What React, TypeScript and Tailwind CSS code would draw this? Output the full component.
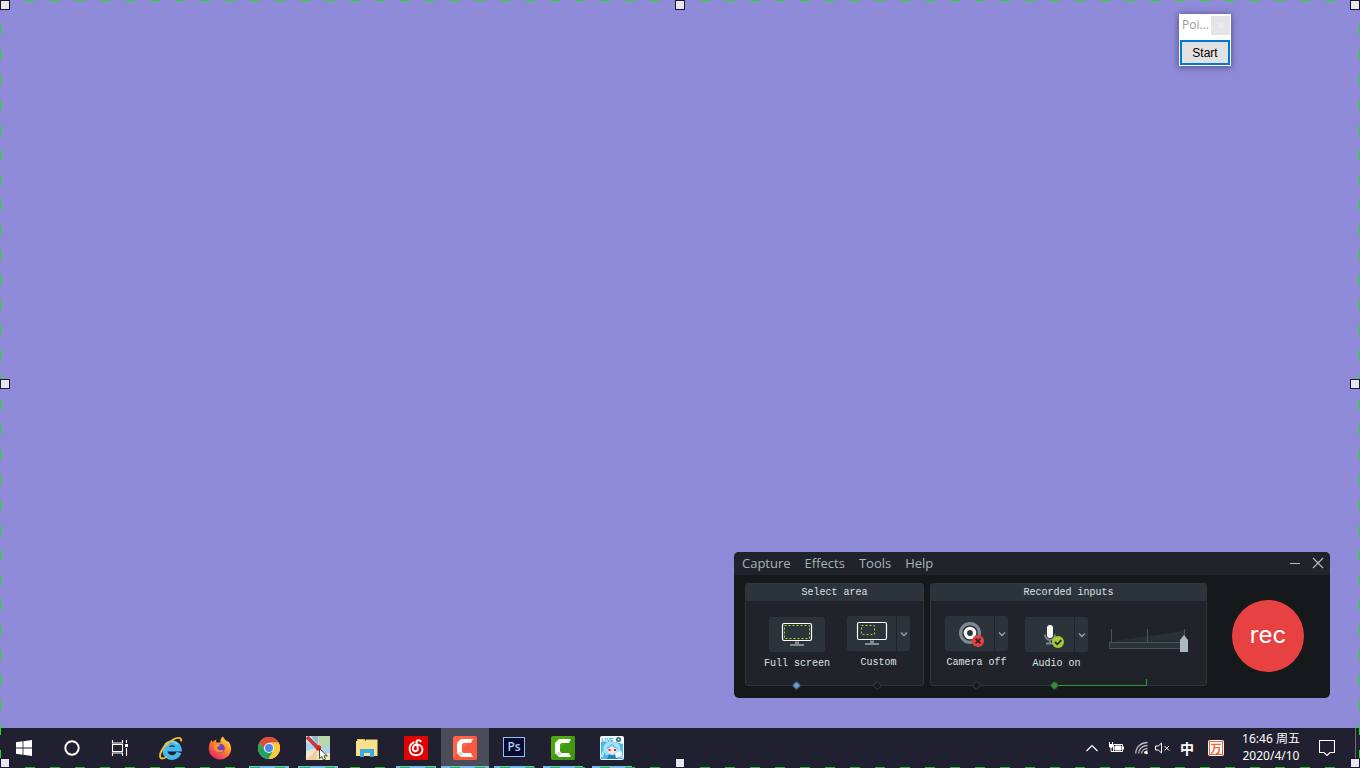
import type { ReactNode } from "react";

const LABEL = "font-['Liberation_Mono','Noto_Sans_CJK_SC',monospace] text-[10px] leading-3 text-[#dfe2e5]";

function Chevron() {
  return (
    <svg width="8" height="6" viewBox="0 0 8 6" fill="none" stroke="#9aa5ad" strokeWidth="1.3">
      <path d="M1 1.5 4 4.5 7 1.5" />
    </svg>
  );
}

function Monitor({ area }: { area: "full" | "custom" }) {
  return (
    <svg width="32" height="26" viewBox="0 0 32 26" fill="none">
      <rect x="1.5" y="1.5" width="29" height="17" rx="1.5" stroke="#ffffff" strokeWidth="1.2" />
      <path d="M14 19.5h4v2.5h5v2H9v-2h5z" fill="#7f8b95" />
      {area === "full" ? (
        <rect x="3.5" y="3.5" width="25" height="13" stroke="#a5d62b" strokeDasharray="2 2" />
      ) : (
        <rect x="5.5" y="4.5" width="13" height="9" stroke="#a5d62b" strokeDasharray="2 2" />
      )}
    </svg>
  );
}

function CameraIcon() {
  return (
    <svg width="28" height="28" viewBox="-2 -1 28 28" fill="none">
      <circle cx="12" cy="12" r="9.4" stroke="#7d8893" strokeWidth="3.2" />
      <circle cx="12" cy="12" r="4.6" stroke="#ffffff" strokeWidth="3.4" />
      <circle cx="20" cy="20" r="6" fill="#e9403f" />
      <path d="m17.6 17.6 4.8 4.8m0-4.8-4.8 4.8" stroke="#24272b" strokeWidth="1.8" />
    </svg>
  );
}

function MicIcon() {
  return (
    <svg width="28" height="28" viewBox="-2 -1 28 28" fill="none">
      <path d="M7 12.5a5 5.5 0 0 0 10 0M12 18v3M8 21.500h8" stroke="#7d8893" strokeWidth="1.8" />
      <rect x="9" y="3" width="6" height="13" rx="3" fill="#ffffff" />
      <circle cx="20" cy="20" r="6" fill="#a4cb2f" />
      <path d="m17 20 2.300 2.300 4-4.200" stroke="#24272b" strokeWidth="1.8" />
    </svg>
  );
}

function CaptureControl({ label, icon, menu, low }: { label: string; icon: ReactNode; menu?: boolean; low?: boolean }) {
  return (
    <div className={low ? "flex flex-col items-center pt-px" : "flex flex-col items-center"}>
      <div className="flex gap-px">
        <button
          type="button"
          aria-label={label}
          className={
            menu
              ? "flex h-[35px] w-[49px] items-center justify-center rounded-l-[3px] bg-[#2d333b]"
              : "flex h-[35px] w-14 items-center justify-center rounded-[3px] bg-[#2d333b]"
          }
        >
          {icon}
        </button>
        {menu && (
          <button
            type="button"
            aria-label={label + " options"}
            className="flex h-[35px] w-[13px] items-center justify-center rounded-r-[3px] bg-[#2d333b]"
          >
            <Chevron />
          </button>
        )}
      </div>
      <span className={LABEL + " mt-1.5 whitespace-nowrap"}>{label}</span>
    </div>
  );
}

function Dot({ className }: { className: string }) {
  return <span className={"absolute -bottom-[4px] size-[7px] rotate-45 rounded-[2px] border " + className} />;
}

function Group({ title, className, children }: { title: string; className: string; children: ReactNode }) {
  return (
    <section className={"relative flex h-[103px] flex-col rounded-[3px] border border-[#2f353c] bg-[#20242a] " + className}>
      <h2 className={LABEL + " flex h-[17px] items-center justify-center bg-[#2d333b]"}>{title}</h2>
      {children}
    </section>
  );
}

function Volume() {
  return (
    <div className="relative flex h-6 w-20 items-end">
      <svg className="absolute left-0 top-0" width="80" height="25" viewBox="0 0 80 25" fill="none">
        <path d="M2 13.500 75 3v10.500z" fill="#293136" />
        <path d="M2.500 1v13M38.500 1v13M75.500 1v13" stroke="#46555b" />
        <rect x=".5" y="14.500" width="74" height="6" fill="#2a3438" stroke="#46555b" />
      </svg>
      <input
        type="range"
        aria-label="Audio level"
        defaultValue={100}
        className="relative h-[17px] w-[79px] appearance-none bg-transparent [&::-webkit-slider-thumb]:h-[17px] [&::-webkit-slider-thumb]:w-2 [&::-webkit-slider-thumb]:appearance-none [&::-webkit-slider-thumb]:bg-[#abb8bf] [&::-webkit-slider-thumb]:[clip-path:polygon(50%_0,100%_30%,100%_100%,0_100%,0_30%)]"
      />
    </div>
  );
}

function Recorder() {
  return (
    <div className="absolute bottom-[30px] right-[30px] w-[596px] overflow-hidden rounded-[5px] bg-[#15191c]">
      <header className="flex h-[23px] items-center justify-between bg-[#20242a] pb-0.5 pl-2 pr-1.5">
        <nav className="flex gap-3.5 font-['Open_Sans','Noto_Sans',sans-serif] text-[13px] leading-5 text-[#a6b3bb]">
          {["Capture", "Effects", "Tools", "Help"].map((m) => (
            <button key={m} type="button">
              {m}
            </button>
          ))}
        </nav>
        <div className="flex items-center gap-3">
          <button type="button" aria-label="Minimize">
            <svg width="10" height="12" viewBox="0 0 10 12">
              <path d="M0 6.500h10" stroke="#b3bdc4" />
            </svg>
          </button>
          <button type="button" aria-label="Close">
            <svg width="12" height="12" viewBox="0 0 12 12">
              <path d="m1 1 10 10M11 1 1 11" stroke="#b3bdc4" strokeWidth="1.1" />
            </svg>
          </button>
        </div>
      </header>
      <div className="flex items-start pb-3 pl-[11px] pt-2">
        <Group title="Select area" className="w-[179px]">
          <div className="flex items-start gap-[17px] pl-[18px] pt-[15px]">
            <CaptureControl label="Full screen" icon={<Monitor area="full" />} low />
            <CaptureControl label="Custom" icon={<Monitor area="custom" />} menu />
          </div>
          <Dot className="left-[47px] border-[#3c5069] bg-[#6699d0]" />
          <Dot className="left-[128px] border-[#343a41] bg-[#15191c]" />
        </Group>
        <Group title="Recorded inputs" className="ml-1.5 w-[277px]">
          <div className="flex items-start pl-3.5 pt-[15px]">
            <CaptureControl label="Camera off" icon={<CameraIcon />} menu />
            <div className="ml-[17px]">
              <CaptureControl label="Audio on" icon={<MicIcon />} menu low />
            </div>
            <div className="ml-[21px] mt-3">
              <Volume />
            </div>
          </div>
          <span className="absolute -bottom-px left-[124px] h-[7px] w-[92px] border-b border-r border-[#2f9a2c]" />
          <Dot className="left-[42px] border-[#343a41] bg-[#15191c]" />
          <Dot className="left-[120px] border-[#2a5a2d] bg-[#34912f]" />
        </Group>
        <button
          type="button"
          className="ml-[25px] mt-[17px] flex size-[72px] items-center justify-center rounded-full bg-[#e84142] pb-0.5 font-['Inter',sans-serif] text-2xl leading-6 text-white"
        >
          rec
        </button>
      </div>
    </div>
  );
}

function PointWindow() {
  return (
    <div className="absolute right-[129px] top-3.5 flex w-[52px] flex-col bg-white p-px shadow-[0_1px_6px_1px_rgba(40,35,90,0.5)]">
      <div className="flex h-[25px] items-start justify-between pl-0.5 pt-px">
        <span className="font-['Open_Sans','Noto_Sans',sans-serif] text-xs leading-[18px] text-[#999999]">Poi...</span>
        <button type="button" aria-label="Close" className="flex h-[19px] w-[19px] items-center justify-center bg-[#e4e4e7]">
          <svg width="7" height="7" viewBox="0 0 7 7">
            <path d="m1 1 5 5M6 1 1 6" stroke="#f0f0f3" strokeWidth="1.200" />
          </svg>
        </button>
      </div>
      <button
        type="button"
        className="h-[25px] border-2 border-[#0078d7] bg-[#e1e1e1] font-['Liberation_Sans',sans-serif] text-xs text-black"
      >
        Start
      </button>
    </div>
  );
}

function CamtasiaIcon({ green }: { green?: boolean }) {
  return (
    <svg width="24" height="24" viewBox="0 0 24 24">
      <rect width="24" height="24" rx="2" fill={green ? "#4ba80f" : "#ff6447"} />
      <path d="M0 22 22 0h0a2 2 0 0 1 2 2v20a2 2 0 0 1-2 2H2a2 2 0 0 1-2-2z" fill={green ? "#3c9210" : "#f9523a"} opacity=".7" />
      <path d="M20 3H8L4 7v10l4 4h12l-2-4h-7.500L9 15.500v-7L10.500 7H18z" fill="#ffffff" />
      <path d="M4 17 9 15.500 10.500 17 8 21z" fill="#d9dddc" />
    </svg>
  );
}

const startIcon = (
  <svg width="16" height="16" viewBox="0 0 16 16" fill="#ffffff">
    <path d="M0 2.200 6.600 1.300v6.300H0zM7.400 1.200 16 0v7.600H7.400zM0 8.400h6.600v6.300L0 13.800zM7.400 8.400H16V16l-8.600-1.200z" />
  </svg>
);

const searchIcon = (
  <svg width="16" height="16" viewBox="0 0 16 16" fill="none">
    <circle cx="8" cy="8" r="6.700" stroke="#ffffff" strokeWidth="1.900" />
  </svg>
);

const taskViewIcon = (
  <svg width="18" height="18" viewBox="0 0 18 18" fill="none" stroke="#ffffff" strokeWidth="1.100">
    <path d="M1.500 1v3h10V1M1.500 17v-3h10v3M1.500 5.500h10v7h-10zM15.500 1v3M15.500 9v8" />
    <path d="M14 5h3v3h-3z" fill="#ffffff" stroke="none" />
  </svg>
);

const ieIcon = (
  <svg width="24" height="24" viewBox="0 0 24 24" fill="none">
    <path d="M20 16.500A7.300 7.300 0 1 1 20.300 13.200H7" stroke="#45b8ee" strokeWidth="4.800" />
    <path d="M18.500 8.500A7.700 7.700 0 0 0 6 8.700" stroke="#9ddffb" strokeWidth="1.200" />
    <path d="M22 5.500c1-3.500-1.800-4.800-7-2.300C7 7 0 16 1.200 21c.6 2.300 3.500 1.900 6.500-.2" stroke="#f2bc2b" strokeWidth="1.900" />
  </svg>
);

const firefoxIcon = (
  <svg width="24" height="24" viewBox="0 0 24 24">
    <defs>
      <linearGradient id="fox" x1=".85" y1=".05" x2=".2" y2=".95">
        <stop offset="0" stopColor="#ffe14d" />
        <stop offset=".45" stopColor="#ff8a2a" />
        <stop offset="1" stopColor="#e9206b" />
      </linearGradient>
    </defs>
    <path d="M15 .5c1 2.500 3 3.500 4.500 5.500V4.500c2.500 2.500 3.700 5.500 3.700 8.500A11 11 0 0 1 12 23.500 11 11 0 0 1 .8 12.500c0-3.500 1-6.500 3-8.800l.7 2.800c1-1.500 2.500-2.500 4-3-.5 1-.6 2-.2 3l4.200 0c-.5-2.500.3-4.500 2.500-6z" fill="url(#fox)" />
    <circle cx="12.200" cy="12.300" r="4.600" fill="#7542c4" />
    <path d="M6 9c2-2 4-1.500 6.500-.3-1 .3-1 1.500-2.500 2-1.300.4-1 2.500 1 3.300 2 .7 3.500-.4 4.800 0-1 2.600-5 3.300-7.500 1.300S5.300 11 6 9z" fill="#ff9130" />
  </svg>
);

const chromeIcon = (
  <svg width="22" height="22" viewBox="0 0 22 22">
    <circle cx="11" cy="11" r="11" fill="#fbc73b" />
    <path d="M1.500 5.500A11 11 0 0 1 20.500 5.500L11 6 6.700 13.500z" fill="#dd4b3e" />
    <path d="M1.500 5.500A11 11 0 0 0 10.500 22L15.500 13.300 6.700 13.500z" fill="#1ea362" />
    <path d="M20.500 5.500A11 11 0 0 1 10.500 22L16 12 11 5.500z" fill="#fbc73b" />
    <circle cx="11" cy="11" r="5.100" fill="#f5f5f5" />
    <circle cx="11" cy="11" r="4" fill="#4788ea" />
  </svg>
);

const pointerMapIcon = (
  <svg width="24" height="24" viewBox="0 0 24 24">
    <path d="M0 0h24v24H0z" fill="#eee8cc" />
    <path d="M0 6 11 12 0 15z" fill="#a8d5ef" />
    <path d="M12 0h12v10L13 11z" fill="#b5d9a7" />
    <path d="M13 11 24 9v8l-6 1z" fill="#a9d3e5" />
    <path d="M0 24 11 13v11z" fill="#f3cf9f" />
    <path d="M12 14 24 22v2H12z" fill="#e5edb0" />
    <path d="M5 0h7v9z" fill="#8fb9e1" />
    <path d="M1 1 13 13" stroke="#b64459" strokeWidth="4" />
    <circle cx="12.500" cy="12" r="2.700" fill="#f31919" />
    <path d="M13.500 12.500v10l2.500-2 1.500 3.500 2-1-1.500-3.200h3.300z" fill="#ffffff" stroke="#222222" strokeWidth=".8" />
  </svg>
);

const folderIcon = (
  <svg width="22" height="18" viewBox="0 0 22 18">
    <path d="M1 0h8v3H1z" fill="#edb93f" />
    <path d="M0 2h9l1-1.500h11.500v16.500H0z" fill="#fbe08c" />
    <path d="M2.500 1h5v1h-5z" fill="#fff6cc" />
    <path d="M4 10h14v8h-4v-4H8v4H4z" fill="#37a9e4" />
  </svg>
);

const neteaseIcon = (
  <svg width="24" height="24" viewBox="0 0 24 24" fill="none">
    <path d="M0 0h24v24H0z" fill="#e30000" />
    <path d="M9.800 6.300C3.800 9 4 19 11.800 19.200c7.800.1 9.200-9.500 1.700-10.700-4.800-.6-6.500 6-2.500 6.700 2.300.3 3.200-1.700 2.700-3.700l-1.200-5c-.3-2.600 2.500-2.900 4.300-1.300" stroke="#ffffff" strokeWidth="1.900" strokeLinecap="round" />
  </svg>
);

const psIcon = (
  <span className="mb-0.5 flex h-5 w-[22px] items-center justify-center border border-[#8bc4ee] bg-[#0b0832] font-['Open_Sans',sans-serif] text-xs font-semibold leading-4 text-[#a5d4f5]">
    Ps
  </span>
);

const liveIcon = (
  <svg width="24" height="24" viewBox="0 0 24 24">
    <rect width="24" height="24" rx="2" fill="#f2fbff" />
    <path d="M1 6h15l7 2v15H1z" fill="#4bb9e6" />
    <path d="M3 13C4 7 8 5 13 6c6 0 8 4 7 9l-2 4H6z" fill="#a5e1f8" />
    <path d="M4 15 1.500 21M20 14l2 8" stroke="#a5e1f8" strokeWidth="2.500" />
    <path d="M7 12.500c3-1 4-2 5-3 1 1.500 3 2.500 5 3l-1 4-4 2-4-2z" fill="#fde4da" />
    <path d="M7 12.500c2-1.500 4-2.500 5-4 1 2 3 3 5.500 4" fill="none" stroke="#5cb7df" strokeWidth="1.300" />
    <path d="M8.500 13h2v2h-2zM14 13h2v2h-2z" fill="#b73550" />
    <path d="m9 18 3 1.500 4-1.500 2 5H7z" fill="#2383b4" />
    <path d="m15 18 4-3 3 2-2 4-4 1z" fill="#f1fbff" />
    <circle cx="18.500" cy="3.500" r="2.500" fill="#2d6277" />
    <circle cx="18.500" cy="3.500" r="1" fill="#e7faff" />
    <text x="1.500" y="5.500" fontSize="5.500" fontWeight="700" fontFamily="Liberation Sans, sans-serif" fill="#33a4d5">
      LIVE
    </text>
  </svg>
);

const systemItems: { name: string; icon: ReactNode }[] = [
  { name: "Start", icon: startIcon },
  { name: "Search", icon: searchIcon },
  { name: "Task view", icon: taskViewIcon },
];

const apps: { name: string; icon: ReactNode; open?: boolean; active?: boolean }[] = [
  { name: "Internet Explorer", icon: ieIcon },
  { name: "Firefox", icon: firefoxIcon },
  { name: "Chrome", icon: chromeIcon, open: true },
  { name: "Pointer", icon: pointerMapIcon, open: true },
  { name: "File Explorer", icon: folderIcon },
  { name: "Music", icon: neteaseIcon, open: true },
  { name: "Recorder", icon: <CamtasiaIcon />, open: true, active: true },
  { name: "Photoshop", icon: psIcon, open: true },
  { name: "Camtasia", icon: <CamtasiaIcon green />, open: true },
  { name: "Live viewer", icon: liveIcon, open: true },
];

function Tray() {
  return (
    <div className="flex h-full items-center text-white">
      <button type="button" aria-label="Show hidden icons">
        <svg width="12" height="8" viewBox="0 0 12 8" fill="none" stroke="#ffffff" strokeWidth="1.200">
          <path d="m.5 7 5.500-5.500L11.500 7" />
        </svg>
      </button>
      <svg className="ml-2.5" width="17" height="14" viewBox="0 0 17 14" fill="none" stroke="#ffffff">
        <path d="M5.500 3.500h9v7h-9z" />
        <path d="M7 5h6v4H7z" fill="#ffffff" />
        <path d="M15.500 5.500v3" />
        <path d="M1 3h4v2.500L3.700 7H2.300L1 5.500z" fill="#ffffff" stroke="none" />
        <path d="M1.500 1v2M4.500 1v2M3 6.500v4h3" />
      </svg>
      <svg className="ml-2.5" width="13" height="14" viewBox="0 0 13 14" fill="none" stroke="#b9bac2">
        <path d="M.7 12.500C1 6 6 1.500 12.500 1.500M3.700 12.500c0-4.500 4-8 8.800-8M6.700 12.500c0-3 2.600-5 5.800-5" strokeWidth="1.300" />
        <path d="M9.700 12.500c0-1.400 1.300-2.200 2.800-2.200" stroke="#ffffff" strokeWidth="1.400" />
        <circle cx="11.500" cy="12" r="1.300" fill="#ffffff" stroke="none" />
      </svg>
      <svg className="ml-[7px]" width="16" height="14" viewBox="0 0 16 14" fill="none" stroke="#ffffff">
        <path d="M.5 5h2.800L6.500 2v10L3.300 9H.5zM9.500 5l4.500 4.500M14 5 9.500 9.500" />
      </svg>
      <span className="ml-[9px] font-['Noto_Sans_CJK_SC',sans-serif] text-sm font-bold leading-5">中</span>
      <span className="ml-3.5 flex size-4 rounded-[2px] bg-white p-px">
        <span className="flex flex-1 items-center justify-center border border-[#f0622f] font-['Noto_Sans_CJK_SC',sans-serif] text-[11px] font-bold leading-3 text-[#f0622f]">
          万
        </span>
      </span>
      <time
        dateTime="2020-04-10T16:46"
        className="ml-4 flex w-[62px] flex-col items-center whitespace-nowrap pb-0.5 font-['Noto_Sans','Noto_Sans_CJK_SC',sans-serif] text-xs leading-[17px]"
      >
        <span>16:46 周五</span>
        <span>2020/4/10</span>
      </time>
      <button type="button" aria-label="Notifications" className="ml-[17px]">
        <svg width="16" height="16" viewBox="0 0 16 16" fill="none" stroke="#ffffff" strokeWidth="1.100">
          <path d="M.5.500h15v12h-4.500L8 15.500 5 12.500H.5z" />
        </svg>
      </button>
      <button type="button" aria-label="Show desktop" className="ml-5 h-full w-[5px] border-l border-[#6b6a78]" />
    </div>
  );
}

function Taskbar() {
  return (
    <footer className="flex h-10 items-stretch justify-between bg-[#212030]">
      <div className="flex">
        {systemItems.map((s) => (
          <button key={s.name} type="button" aria-label={s.name} className="flex w-12 items-center justify-center">
            {s.icon}
          </button>
        ))}
        <div className="ml-[3px] flex gap-px">
          {apps.map((a) => (
            <button
              key={a.name}
              type="button"
              aria-label={a.name}
              className={
                a.active
                  ? "relative flex w-12 items-center justify-center bg-[#4b4b59]"
                  : "relative flex w-12 items-center justify-center"
              }
            >
              {a.icon}
              {a.open && (
                <span
                  className={
                    a.active
                      ? "absolute inset-x-0 bottom-0 h-0.5 bg-[#76b9ed]"
                      : "absolute inset-x-1 bottom-0 h-0.5 bg-[#76b9ed]"
                  }
                />
              )}
            </button>
          ))}
        </div>
      </div>
      <Tray />
    </footer>
  );
}

const handles = [
  "left-0 top-0",
  "left-1/2 top-0 -translate-x-1/2",
  "right-0 top-0",
  "left-0 top-1/2 -translate-y-1/2",
  "right-0 top-1/2 -translate-y-1/2",
  "bottom-0 left-0",
  "bottom-0 left-1/2 -translate-x-1/2",
  "bottom-0 right-0",
];

function SelectionFrame() {
  return (
    <div className="pointer-events-none absolute inset-0">
      <span className="absolute inset-x-0 top-0 h-px bg-[repeating-linear-gradient(90deg,#1be31b_0_10px,transparent_10px_25px)]" />
      <span className="absolute inset-x-0 bottom-0 h-px bg-[repeating-linear-gradient(90deg,#1fbd27_0_10px,transparent_10px_25px)]" />
      <span className="absolute inset-y-0 left-0 w-px bg-[repeating-linear-gradient(180deg,#1be31b_0_10px,transparent_10px_25px)]" />
      <span className="absolute inset-y-0 right-0 w-px bg-[repeating-linear-gradient(180deg,#1be31b_0_10px,transparent_10px_25px)]" />
      {handles.map((h) => (
        <span key={h} className={"absolute size-2.5 border border-[#1a1830] bg-[#e8e6ee] " + h} />
      ))}
    </div>
  );
}

export default function App() {
  return (
    <div className="relative flex min-h-screen flex-col overflow-hidden">
      <main className="relative flex-1 bg-[#8f8bd8]">
        <PointWindow />
        <Recorder />
      </main>
      <Taskbar />
      <SelectionFrame />
    </div>
  );
}
